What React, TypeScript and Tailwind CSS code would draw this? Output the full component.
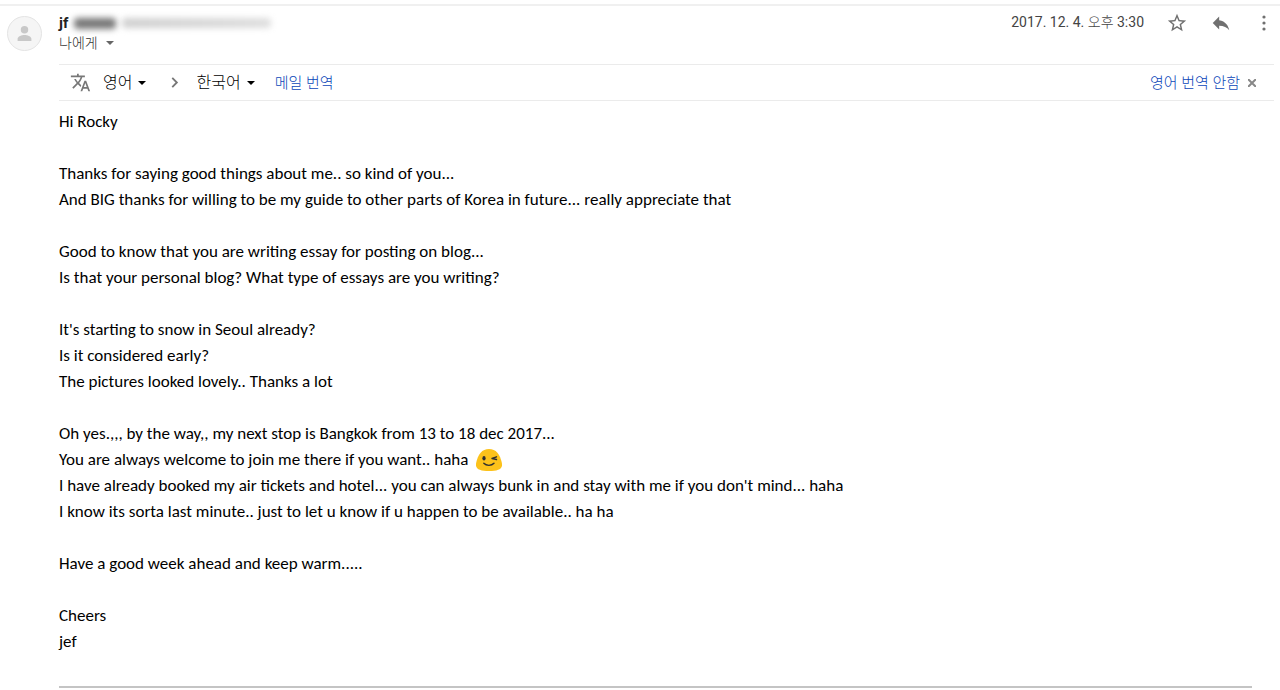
import React from "react";

const paragraphs: string[][] = [
  ["Hi Rocky"],
  [
    "Thanks for saying good things about me.. so kind of you...",
    "And BIG thanks for willing to be my guide to other parts of Korea in future... really appreciate that",
  ],
  [
    "Good to know that you are writing essay for posting on blog...",
    "Is that your personal blog? What type of essays are you writing?",
  ],
  [
    "It's starting to snow in Seoul already?",
    "Is it considered early?",
    "The pictures looked lovely.. Thanks a lot",
  ],
  [
    "Oh yes.,,, by the way,, my next stop is Bangkok from 13 to 18 dec 2017...",
    "You are always welcome to join me there if you want.. haha {wink}",
    "I have already booked my air tickets and hotel... you can always bunk in and stay with me if you don't mind... haha",
    "I know its sorta last minute.. just to let u know if u happen to be available.. ha ha",
  ],
  ["Have a good week ahead and keep warm....."],
  ["Cheers", "jef"],
];

function Wink() {
  return (
    <svg viewBox="0 0 26 22" className="ml-1 h-[22px] w-[26px] shrink-0" role="img" aria-label="wink">
      <path d="M13 0C20 0 24 5 26 14.500c.8 5.500-4 7.500-13 7.500S-.8 20 0 14.500C2 5 6 0 13 0Z" fill="#fcc21b" />
      <ellipse cx="8" cy="9.300" rx="1.600" ry="2.200" fill="#2f2f2f" />
      <path d="M20.500 7.800l-4.500 1.700 4.500 1M7.800 14.300c2.600 2.700 7.600 2.700 10.200 0" fill="none" stroke="#2f2f2f" strokeWidth="1.400" strokeLinecap="round" strokeLinejoin="round" />
    </svg>
  );
}

function Caret({ className }: { className: string }) {
  return (
    <svg viewBox="0 0 10 5" className={className} aria-hidden="true">
      <path d="M0 0h10L5 5z" fill="currentColor" />
    </svg>
  );
}

function Line({ text }: { text: string }) {
  const [before, after] = text.split("{wink}");
  return (
    <div className="flex min-h-[26px] items-center">
      <span className="whitespace-pre-wrap">{before}</span>
      {after !== undefined && <Wink />}
    </div>
  );
}

export default function App() {
  return (
    <main className="bg-white font-['Roboto','Noto_Sans_CJK_KR',sans-serif] text-[#222]">
      <div className="h-[6px] border-b-2 border-[#f0f0f0] bg-white" />
      <article className="flex pr-[6px] pl-[7px]">
        <div className="mt-[10px] mr-[17px] flex h-[35px] w-[35px] shrink-0 items-center justify-center rounded-full border border-[#e4e4e4] bg-[#f5f5f5]">
          <svg viewBox="0 0 16 16" className="h-[17px] w-[17px]" fill="#c8c8c8" aria-hidden="true">
            <circle cx="8" cy="4.500" r="3.500" />
            <path d="M1.500 15v-2c0-2.500 4-3.700 6.500-3.700s6.500 1.200 6.500 3.700v2z" />
          </svg>
        </div>
        <div className="min-w-0 flex-1">
          <header className="flex h-[58px] justify-between">
            <div className="pt-[7px]">
              <div className="flex h-5 items-center gap-[6px]">
                <h1 className="text-[15px] leading-5 font-bold">jf</h1>
                <span className="h-[11px] w-[42px] rounded-sm bg-[#777] blur-[3px]" />
                <span className="h-[10px] w-[149px] rounded-sm bg-linear-to-r from-[#d0d0d0] to-[#dedede] blur-[3px]" />
              </div>
              <button type="button" className="flex h-5 items-center gap-2 text-[14px] leading-5 font-light text-[#333]">
                나에게
                <Caret className="h-1 w-2 text-[#666]" />
              </button>
            </div>
            <div className="flex h-8 items-center text-[#707070]">
              <time className="mr-[22px] text-[14px] leading-5 text-[#444]">
                2017. 12. 4. <span className="font-light">오후</span> 3:30
              </time>
              <button type="button" aria-label="별표" className="mt-[2px] mr-[22px]">
                <svg viewBox="0 0 24 24" className="h-[22px] w-[22px]" fill="currentColor">
                  <path d="M22 9.240l-7.190-.620L12 2 9.190 8.630 2 9.240l5.460 4.730L5.820 21 12 17.270 18.180 21l-1.630-7.030L22 9.240zM12 15.400l-3.760 2.270 1-4.280-3.320-2.880 4.380-.380L12 6.100l1.710 4.040 4.380.380-3.320 2.880 1 4.280L12 15.400z" />
                </svg>
              </button>
              <button type="button" aria-label="답장" className="mt-[2px] mr-[22px]">
                <svg viewBox="0 0 24 24" className="h-[22px] w-[22px]" fill="currentColor">
                  <path d="M10 9V5l-7 7 7 7v-4.100c5 0 8.500 1.600 11 5.100-1-5-4-10-11-11z" />
                </svg>
              </button>
              <button type="button" aria-label="더보기" className="mt-[2px]">
                <svg viewBox="0 0 20 20" className="h-5 w-5" fill="currentColor">
                  <circle cx="10" cy="4" r="1.600" />
                  <circle cx="10" cy="10" r="1.600" />
                  <circle cx="10" cy="16" r="1.600" />
                </svg>
              </button>
            </div>
          </header>
          <section className="flex h-[37px] items-center border-y border-[#ebebeb] pl-[11px] pr-[18px]">
            <svg viewBox="0 0 24 24" className="mr-3 h-[21px] w-[21px]" fill="#777" aria-hidden="true">
              <path d="M12.870 15.070l-2.540-2.510.030-.030c1.740-1.940 2.980-4.170 3.710-6.530H17V4h-7V2H8v2H1v1.990h11.170C11.500 7.920 10.440 9.750 9 11.350 8.070 10.320 7.300 9.190 6.690 8h-2c.730 1.630 1.730 3.170 2.980 4.560l-5.090 5.020L4 19l5-5 3.110 3.110.760-2.040zM18.500 10h-2L12 22h2l1.120-3h4.750L21 22h2l-4.500-12zm-2.620 7l1.620-4.330L19.120 17h-3.240z" />
            </svg>
            <button type="button" className="flex items-center gap-[6px] text-[16px] leading-6 font-light text-black">
              영어
              <Caret className="h-1 w-2" />
            </button>
            <svg viewBox="0 0 8 12" className="mr-[17px] ml-[25px] h-[11px] w-2" fill="none" stroke="#777" strokeWidth="2" aria-hidden="true">
              <path d="M1 1l5 5-5 5" />
            </svg>
            <button type="button" className="flex items-center gap-[6px] text-[16px] leading-6 font-light text-black">
              한국어
              <Caret className="h-1 w-2" />
            </button>
            <a href="#translate" className="ml-5 text-[15px] leading-5 font-light text-[#0b46b8]">메일 번역</a>
            <a href="#never" className="mr-2 ml-auto text-[15px] leading-5 font-light text-[#0b46b8]">영어 번역 안함</a>
            <button type="button" aria-label="닫기">
              <svg viewBox="0 0 8 8" className="h-2 w-2" stroke="#888" strokeWidth="2">
                <path d="M0 0l8 8M8 0L0 8" />
              </svg>
            </button>
          </section>
          <div className="mt-2 mr-[22px] flex flex-col gap-[26px] border-b-2 border-[#c4c4c4] pb-[31px] font-['Carlito','Lato',sans-serif] text-[17px] leading-[26px] text-black">
            {paragraphs.map((lines) => (
              <div key={lines[0]}>
                {lines.map((line) => (
                  <Line key={line} text={line} />
                ))}
              </div>
            ))}
          </div>
        </div>
      </article>
    </main>
  );
}
